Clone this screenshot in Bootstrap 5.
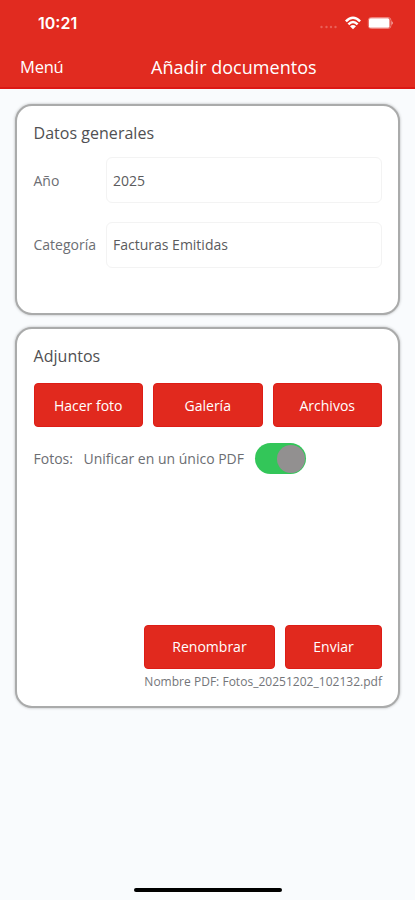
<!DOCTYPE html>
<html lang="es">
<head>
<meta charset="utf-8">
<meta name="viewport" content="width=device-width, initial-scale=1">
<title>Añadir documentos</title>
<link href="https://cdn.jsdelivr.net/npm/bootstrap@5.3.0/dist/css/bootstrap.min.css" rel="stylesheet">
<style>
body{font-family:"Open Sans",sans-serif;background:#f9fbfd;height:900px;overflow:hidden;font-size:14px;line-height:20px;color:#6c6e73}
.app-head{background:#e12b20;height:89px;border-bottom:2px solid #dc1814;color:#fff}
.status-row{height:46px;padding:0 20px 0 38px}
.clock{font:600 16px/20px Inter,sans-serif}
.title-row{height:41px;display:grid;grid-template-columns:151px 1fr;align-items:center;font-size:18px;line-height:24px;letter-spacing:.03px}
.menu-link{color:#fff;padding-left:20px;font-size:16.5px;letter-spacing:-.2px;text-decoration:none}
.panel{border:2px solid #aaabab;border-radius:17px;background:#fff;box-shadow:0 0 3px rgba(0,0,0,.28);padding:0 16px 0 16.5px;margin:0 15px}
.panel-a{margin-top:15px;height:211px}
.panel-b{margin-top:12px;height:381px}
.panel-title{font-size:16px;line-height:22px;color:#505052;margin:0;padding-top:16px;letter-spacing:.03px}
.form-line{display:grid;grid-template-columns:72.5px 1fr;align-items:center}
.field-box{height:46px;border:1px solid #f3f3f3;border-radius:6px;padding:1px 6px 0;color:#5b5b5d;background:#fff}
.line-year{margin-top:13px}
.line-year>span{padding-top:1px}
.line-category{margin-top:19px}
.line-category .field-box{padding-top:0}
.btn-app{background:#e1291e;border:1px solid #dd1d16;color:#fff;border-radius:4px;height:44px;font-size:14px;line-height:20px;padding:0}
.action-row{display:grid;grid-template-columns:repeat(3,1fr);gap:10px;margin-top:16px}
.action-row .btn-app{padding-top:2px}
.merge-row{gap:10.5px;margin-top:16px}
.merge-row>span:not(.switch-track){padding-top:1px}
.send-row{display:grid;grid-template-columns:131px 97px;gap:10px;justify-content:end}
.switch-track{width:51px;height:31px;border-radius:16px;background:#33c659;padding:1px}
.switch-knob{width:28px;height:28px;border-radius:50%;background:#929090}
.pdf-name{font-size:12px;line-height:16px;color:#737579;letter-spacing:.02px;margin-top:5px}
.send-block{padding-bottom:16px}
.home-bar{width:148px;height:4px;border-radius:2px;background:#000;bottom:8px;left:134px}
</style>
<script src="https://cdn.jsdelivr.net/npm/bootstrap@5.3.0/dist/js/bootstrap.bundle.min.js"></script>
</head>
<body>
<header class="app-head">
  <div class="status-row d-flex align-items-center justify-content-between">
    <span class="clock">10:21</span>
    <svg width="76" height="16" viewBox="0 0 76 16" fill="none">
      <g fill="#fff" fill-opacity=".25"><circle cx="2.500" cy="12" r="1.200"/><circle cx="7.500" cy="12" r="1.200"/><circle cx="12" cy="12" r="1.200"/><circle cx="16.500" cy="12" r="1.200"/></g>
      <g stroke="#fff" stroke-width="2.500"><path d="M26.900 6.400Q34 -.8 41.100 6.400"/><path d="M29.400 9.300Q34 4.800 38.600 9.300"/></g>
      <path d="M31 11.200Q34 8.800 37 11.200L34 14.200Z" fill="#fff"/>
      <rect x="49.300" y="2.500" width="22.700" height="11" rx="3" stroke="#fff" stroke-opacity=".4"/>
      <rect x="50" y="3.200" width="20.500" height="9.600" rx="1.600" fill="#fff"/>
      <path d="M72.500 6v4q1.600-.8 1.600-2t-1.600-2Z" fill="#fff" fill-opacity=".5"/>
    </svg>
  </div>
  <div class="title-row"><a class="menu-link" href="#">Menú</a><span>Añadir documentos</span></div>
</header>
<main>
  <section class="panel panel-a">
    <h1 class="panel-title fw-normal">Datos generales</h1>
    <div class="form-line line-year"><span>Año</span><div class="field-box d-flex align-items-center">2025</div></div>
    <div class="form-line line-category"><span>Categoría</span><div class="field-box d-flex align-items-center">Facturas Emitidas</div></div>
  </section>
  <section class="panel panel-b d-flex flex-column">
    <h2 class="panel-title fw-normal">Adjuntos</h2>
    <div class="action-row">
      <button class="btn btn-app">Hacer foto</button>
      <button class="btn btn-app">Galería</button>
      <button class="btn btn-app">Archivos</button>
    </div>
    <div class="merge-row d-flex align-items-center">
      <span>Fotos:</span><span>Unificar en un único PDF</span>
      <span class="switch-track d-flex align-items-center justify-content-end"><span class="switch-knob"></span></span>
    </div>
    <div class="send-block mt-auto ms-auto">
      <div class="send-row"><button class="btn btn-app">Renombrar</button><button class="btn btn-app">Enviar</button></div>
      <div class="pdf-name text-end">Nombre PDF: Fotos_20251202_102132.pdf</div>
    </div>
  </section>
</main>
<div class="home-bar position-absolute"></div>
</body>
</html>
